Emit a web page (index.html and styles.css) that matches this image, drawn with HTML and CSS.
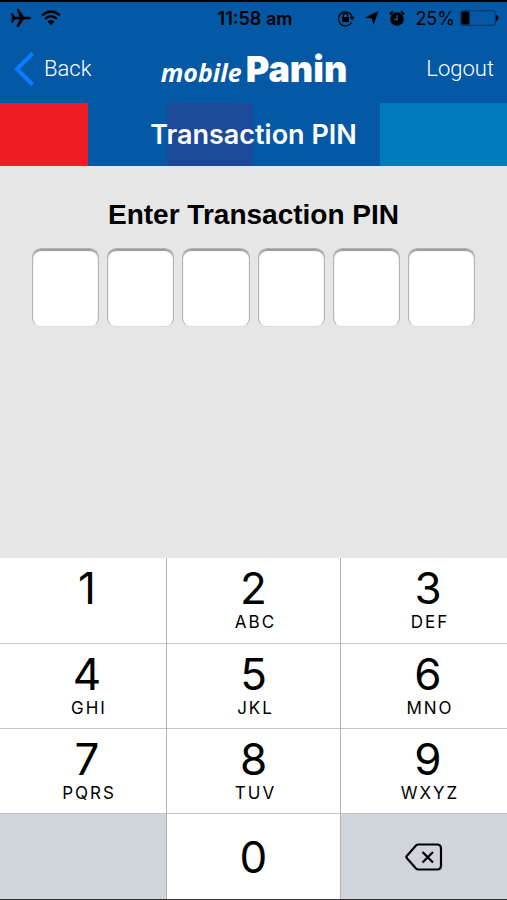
FILE: index.html
```
<!DOCTYPE html>
<html lang="en">

	<head>
		<meta charset="UTF-8">
		<meta name="viewport" content="width=device-width, initial-scale=1">
		<title>Transaction PIN</title>
		<link rel="stylesheet" href="styles.css">
	</head>

	<body>
		<header class="top">
			<div class="status">
				<div class="status-left">
					<svg width="20" height="18" viewBox="0 0 20 18"><path d="M0 4h1.500l2.500 3.700h4.500L5.500 0h2l5.500 7.700h5c2.300 0 2.300 2.600 0 2.600h-5L7.500 18h-2l3-7.700H4L1.500 14H0l1.200-5z"/></svg>
					<svg width="20" height="16" viewBox="0 0 20 16"><path d="M1 5.500q9-8 18 0M4 9q6-5.500 12 0" fill="none" stroke="#000" stroke-width="2.300"/><path d="M6.500 11.500q3.500-3 7 0L10 15.500z"/></svg>
				</div>
				<div class="clock">11:58 am</div>
				<div class="status-right">
					<svg width="18" height="18" viewBox="0 0 18 18"><path d="M14.500 13.500A7 7 0 1 1 15.200 8" fill="none" stroke="#000" stroke-width="1.300"/><path d="M12.500 8h5.200l-2.600 3.500z"/><rect x="5" y="8" width="7" height="5"/><path d="M6.300 8V6.500a2.200 2.200 0 0 1 4.400 0V8" fill="none" stroke="#000" stroke-width="1.300"/></svg>
					<svg width="14" height="14" viewBox="0 0 14 14"><path d="M13.500 0L8.500 14L7 7.500L0 6.500z"/></svg>
					<svg width="16" height="17" viewBox="0 0 16 17"><circle cx="8" cy="9" r="6.800"/><path d="M.8 4.200L4 1.200M15.200 4.200L12 1.200" stroke="#000" stroke-width="2"/><path d="M8 5v4.500H5" fill="none" stroke="#0459a6" stroke-width="1.300"/></svg>
					<span class="percent">25%</span>
					<svg width="39" height="16" viewBox="0 0 39 16"><rect x=".7" y=".7" width="34.600" height="14.600" rx="2.500" fill="none" stroke="#05305f" stroke-width="1"/><rect x="1.500" y="1.500" width="8" height="13" rx="1"/><path d="M36 4.500q5 3.500 0 7z"/></svg>
				</div>
			</div>
			<nav class="nav">
				<a class="back" href="#">
					<svg width="20" height="34" viewBox="0 0 20 34"><path d="M18.500 1.500L3 17l15.500 15.500" fill="none" stroke="#0a7cff" stroke-width="4"/></svg>
					Back
				</a>
				<div class="logo"><span class="logo-mobile">mobile</span><span class="logo-panin">Panin</span></div>
				<a class="logout" href="#">Logout</a>
			</nav>
		</header>

		<h1 class="banner">Transaction PIN</h1>

		<main class="content">
			<h2 class="title" id="title">Enter Transaction PIN</h2>
			<div class="pin" role="group" aria-labelledby="title">
				<input type="password" maxlength="1" aria-label="Digit 1">
				<input type="password" maxlength="1" aria-label="Digit 2">
				<input type="password" maxlength="1" aria-label="Digit 3">
				<input type="password" maxlength="1" aria-label="Digit 4">
				<input type="password" maxlength="1" aria-label="Digit 5">
				<input type="password" maxlength="1" aria-label="Digit 6">
			</div>
		</main>

		<div class="keypad">
			<button class="key side">1</button>
			<button class="key">2<small>ABC</small></button>
			<button class="key side">3<small>DEF</small></button>
			<button class="key side">4<small>GHI</small></button>
			<button class="key">5<small>JKL</small></button>
			<button class="key side">6<small>MNO</small></button>
			<button class="key side">7<small>PQRS</small></button>
			<button class="key">8<small>TUV</small></button>
			<button class="key side">9<small>WXYZ</small></button>
			<div class="blank"></div>
			<button class="key zero">0</button>
			<button class="key delete" aria-label="Delete">
				<svg width="38" height="28" viewBox="0 0 38 28"><path d="M13.500 1.500H32q4 0 4 4v17q0 4-4 4H13.500q-1.500 0-2.500-1L2 15.200q-1.200-1.200 0-2.400l9-10.300q1-1 2.500-1zM17.500 9l10.500 10.500M28 9L17.500 19.500" fill="none" stroke="#000" stroke-width="2.200"/></svg>
			</button>
		</div>
	</body>

</html>
```
FILE: styles.css
```
* {
	margin: 0;
	padding: 0;
	box-sizing: border-box;
}

body {
	display: flex;
	flex-direction: column;
	min-height: 100vh;
	background-color: #e6e6e6;
	font-family: Inter, "Liberation Sans", sans-serif;
	color: #000;
}

a {
	color: #fff;
	text-decoration: none;
}

svg {
	display: block;
	flex: none;
}

.top {
	background-color: #0459a6;
	border-top: 2px solid #000;
}

.status {
	display: grid;
	grid-template-columns: 1fr auto 1fr;
	align-items: center;
	height: 32px;
	padding: 0 8px 0 11px;
	font-size: 18px;
}

.status-left,
.status-right {
	display: flex;
	align-items: center;
	gap: 10px;
}

.status-right {
	justify-content: flex-end;
}

.clock {
	font-weight: 600;
}

.percent {
	margin-right: -5px;
}

.nav {
	display: grid;
	grid-template-columns: 1fr auto 1fr;
	align-items: center;
	height: 69px;
	padding: 0 13px 0 14px;
	font-family: Roboto, "Liberation Sans", sans-serif;
	font-size: 22px;
	font-weight: 300;
}

.back {
	display: flex;
	align-items: center;
	gap: 10px;
}

.logo {
	display: flex;
	align-items: baseline;
	gap: 4px;
	color: #fff;
}

.logo-mobile {
	font-family: "Open Sans", sans-serif;
	font-size: 25px;
	font-style: italic;
	font-weight: 700;
}

.logo-panin {
	font-family: Inter, sans-serif;
	font-size: 36px;
	font-weight: 900;
}

.logout {
	text-align: right;
}

.banner {
	line-height: 63px;
	background: linear-gradient(to right, #ee1c25 88px, #0459a6 88px, #0459a6 33%, #1c4998 33%, #1c4998 50%, #0459a6 50%, #0459a6 75%, #007bbd 75%);
	color: #fff;
	font-size: 27px;
	font-weight: 600;
	text-align: center;
}

.content {
	flex: 1;
	padding: 32px;
}

.title {
	line-height: 34px;
	font-family: "Liberation Sans", sans-serif;
	font-size: 28px;
	text-align: center;
}

.pin {
	display: flex;
	gap: 8px;
	margin-top: 16px;
}

.pin input {
	flex: 1;
	min-width: 0;
	height: 79px;
	border: 1px solid #b4b4b4;
	border-bottom-color: #dcdcdc;
	border-radius: 9px;
	outline: none;
	background-color: #fff;
	box-shadow: inset 0 2px 1px #999;
	font-size: 32px;
	text-align: center;
}

.keypad {
	display: grid;
	grid-template-columns: 166fr 173fr 166fr;
	grid-template-rows: 86px 85px 85px 85px;
	column-gap: 1px;
	background-color: #b4b4b4;
	border-bottom: 1px solid #333;
}

.key {
	display: flex;
	flex-direction: column;
	align-items: center;
	padding-top: 8px;
	border: none;
	border-bottom: 1px solid #c4c4c4;
	background-color: #fff;
	color: #000;
	font-family: Inter, sans-serif;
	font-size: 44px;
	line-height: 44px;
}

.key small {
	margin-left: 4px;
	font-size: 17px;
	line-height: 24px;
	letter-spacing: 2px;
}

.side {
	padding-left: 8px;
}

.zero,
.delete {
	justify-content: center;
	padding-top: 0;
	border-bottom: none;
}

.blank,
.delete {
	background-color: #d0d5db;
}
```
